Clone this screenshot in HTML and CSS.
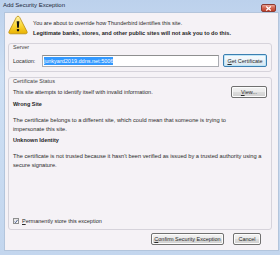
FILE: index.html
```html
<!DOCTYPE html>
<html lang="en">
<head>
  <meta charset="UTF-8">
  <title>Add Security Exception</title>
  <link rel="stylesheet" href="styles.css">
</head>
<body>

  <div class="window">
    <div class="titlebar">
      <span class="title">Add Security Exception</span>
      <span class="close">
        <svg width="7" height="5" viewBox="0 0 7 5"><path d="M1.2 0.6 L5.8 4.4 M5.8 0.6 L1.2 4.4" stroke="#fff" stroke-width="1.3"/></svg>
      </span>
    </div>

    <div class="client">
      <div class="intro">
        <svg class="warn" width="20" height="20" viewBox="0 0 20 20">
          <defs>
            <linearGradient id="yel" x1="0" y1="0" x2="0" y2="1">
              <stop offset="0" stop-color="#fff4a8"/>
              <stop offset="0.5" stop-color="#fbd83a"/>
              <stop offset="1" stop-color="#e9b100"/>
            </linearGradient>
          </defs>
          <path d="M10 1.2 C10.8 1.2 11.3 1.7 11.7 2.4 L19 16.6 C19.5 17.7 19 18.8 17.7 18.8 H2.3 C1 18.8 0.5 17.7 1 16.6 L8.3 2.4 C8.7 1.7 9.2 1.2 10 1.2 Z" fill="url(#yel)" stroke="#b98b0a" stroke-width="0.8"/>
          <path d="M8.7 6.2 H11.3 L10.8 12.8 H9.2 Z" fill="#111"/>
          <rect x="8.9" y="14" width="2.2" height="2.2" rx="0.4" fill="#111"/>
        </svg>
        <div class="intro-text">
          <p>You are about to override how Thunderbird identifies this site.</p>
          <p class="strong">Legitimate banks, stores, and other public sites will not ask you to do this.</p>
        </div>
      </div>

      <div class="group server">
        <div class="caption">Server</div>
        <div class="row">
          <label class="loc-label">Location:</label>
          <div class="textbox"><span class="selected">junkyard2019.ddns.net:5006</span></div>
          <button class="btn default"><u>G</u>et Certificate</button>
        </div>
      </div>

      <div class="group status">
        <div class="caption">Certificate Status</div>
        <div class="row">
          <span class="grow">This site attempts to identify itself with invalid information.</span>
          <button class="btn view"><u>V</u>iew...</button>
        </div>
        <h4>Wrong Site</h4>
        <p>The certificate belongs to a different site, which could mean that someone is trying to<br>impersonate this site.</p>
        <h4>Unknown Identity</h4>
        <p>The certificate is not trusted because it hasn't been verified as issued by a trusted authority using a<br>secure signature.</p>
        <label class="check">
          <span class="box">
            <svg width="5" height="5" viewBox="0 0 5 5"><path d="M0.6 2.6 L1.9 4 L4.4 0.6" fill="none" stroke="#3a4f86" stroke-width="1.1"/></svg>
          </span>
          <span><u>P</u>ermanently store this exception</span>
        </label>
      </div>

      <div class="actions">
        <button class="btn confirm"><u>C</u>onfirm Security Exception</button>
        <button class="btn cancel">Cancel</button>
      </div>
    </div>
  </div>

</body>
</html>
```

FILE: styles.css
```css
* {
  margin: 0;
  padding: 0;
  box-sizing: border-box;
}

body {
  width: 280px;
  height: 255px;
  overflow: hidden;
  font-family: "Liberation Sans", Arial, sans-serif;
  font-size: 5.5px;
  color: #2a2a2a;
  background-color: #c4d7ef;
}

.window {
  height: 255px;
  display: flex;
  flex-direction: column;
  background: linear-gradient(#bcd1ec, #cfe0f4 30%, #c3d6ee);
}

.titlebar {
  height: 13px;
  display: flex;
  align-items: flex-start;
  padding-left: 3px;
}

.title {
  font-size: 6px;
  line-height: 10px;
  color: #1b2838;
}

.close {
  margin-left: auto;
  margin-right: 4px;
  margin-top: 4px;
  width: 15px;
  height: 8px;
  border: 1px solid #8b3b33;
  border-radius: 2px;
  background: linear-gradient(#eba596, #d06450 50%, #c23f28);
  display: flex;
  align-items: center;
  justify-content: center;
}

.client {
  flex: 1;
  margin: 0 2px 5px 5px;
  padding: 2px 6px 5px 3px;
  background-color: #f5f2f6;
  box-shadow: 0 0 0 1px #b3c5dc;
  display: flex;
  flex-direction: column;
}

.intro {
  display: flex;
  height: 23px;
}

.intro-text {
  margin-left: 5px;
  padding-top: 3px;
}

.intro-text p {
  line-height: 10px;
  white-space: nowrap;
}

.strong {
  font-weight: bold;
  font-size: 5.6px;
  color: #1e1e1e;
}

.group {
  margin-top: 5px;
  border: 1px solid #d6d3db;
  border-radius: 3px;
  padding: 0 4px 4px 4px;
}

.caption {
  color: #444;
  line-height: 7px;
}

.row {
  display: flex;
  align-items: center;
}

.server .row {
  margin-top: 3px;
  height: 13px;
}

.loc-label {
  width: 29px;
}

.textbox {
  flex: 1;
  height: 12px;
  background-color: #fff;
  border: 1px solid #abadb3;
  border-top-color: #8e8f8f;
  padding-left: 1px;
  display: flex;
  align-items: center;
}

.selected {
  background-color: #3399ff;
  color: #fff;
  line-height: 8px;
}

.btn {
  font-family: inherit;
  font-size: 5.5px;
  color: #2a2a2a;
  height: 12px;
  border: 1px solid #707070;
  border-radius: 2px;
  background: linear-gradient(#f2f2f2, #ebebeb 50%, #dddddd 50%, #cfcfcf);
  box-shadow: inset 0 0 0 1px #fcfcfc;
  display: flex;
  align-items: center;
  justify-content: center;
}

.btn.default {
  width: 44px;
  height: 13px;
  margin-left: 4px;
  border-color: #3c7fb1;
  background: linear-gradient(#f6fafd, #eef5fa 50%, #e2eef6 50%, #d8e7f1);
  box-shadow: inset 0 0 0 1px #bfe5f7;
}

.status {
  flex: 1;
  display: flex;
  flex-direction: column;
}

.status .caption {
  line-height: 6px;
}

.status .row {
  margin-top: 2px;
}

.grow {
  flex: 1;
  white-space: nowrap;
}

.btn.view {
  width: 36px;
}

.status h4 {
  margin-top: 2px;
  line-height: 8px;
  font-size: 5.5px;
  color: #1e1e1e;
}

.status p {
  margin-top: 8px;
  line-height: 9px;
  font-size: 5.7px;
  white-space: nowrap;
}

.check {
  margin-top: auto;
  display: flex;
  align-items: center;
  line-height: 8px;
}

.box {
  width: 6px;
  height: 6px;
  margin-right: 3px;
  border: 1px solid #8e8f8f;
  background: linear-gradient(#e4e4e4, #fafafa);
  display: flex;
  align-items: center;
  justify-content: center;
}

.actions {
  margin-top: 3px;
  padding-right: 11px;
  display: flex;
  justify-content: flex-end;
  gap: 9px;
}

.btn.confirm {
  width: 73px;
}

.btn.cancel {
  width: 28px;
}
```
